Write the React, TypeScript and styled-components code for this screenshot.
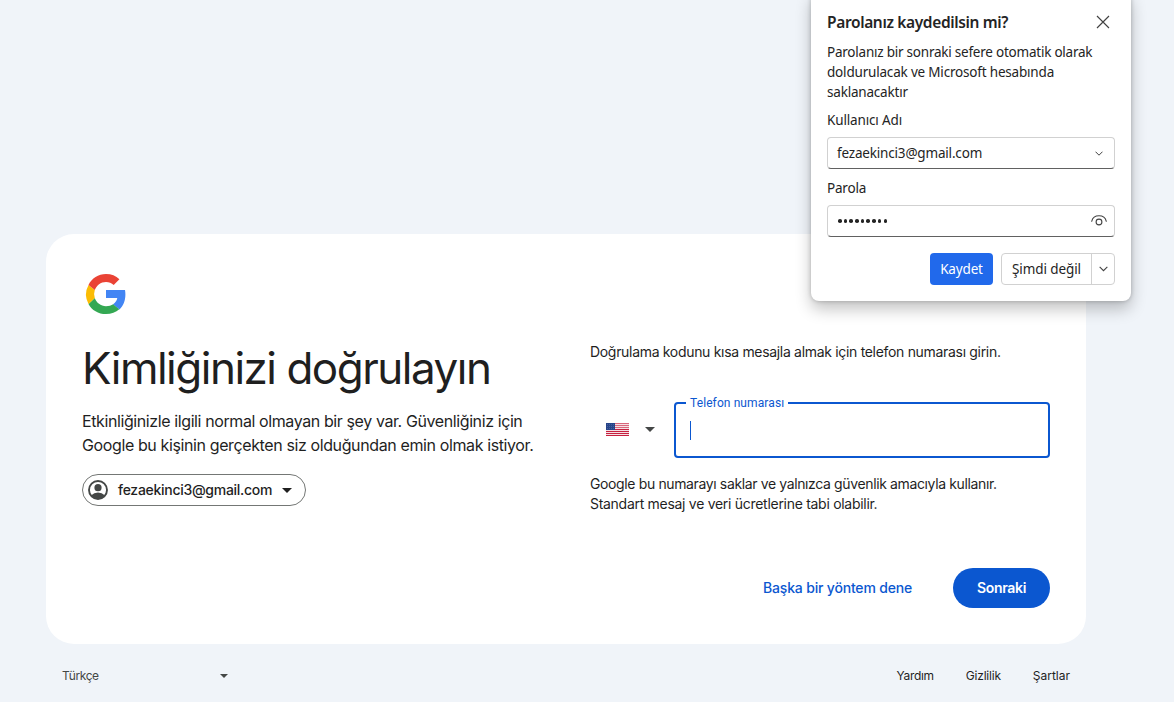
import React from "react";
import styled, { createGlobalStyle } from "styled-components";

const GlobalStyle = createGlobalStyle`
  * { box-sizing: border-box; }
  html, body { margin: 0; padding: 0; background: #f0f4f9; overflow: hidden; }
  button, input { font: inherit; letter-spacing: inherit; }
  svg { display: block; flex: none; }
`;

const sans = `Inter, Roboto, "Liberation Sans", sans-serif`;
const segoe = `"Noto Sans", "Open Sans", sans-serif`;

const Page = styled.div`
  position: relative;
  width: 1174px;
  height: 702px;
  padding: 234px 88px 0 46px;
  background: #f0f4f9;
  font-family: ${sans};
  color: #1f1f1f;
  overflow: hidden;
`;

const Card = styled.main`
  display: grid;
  grid-template-columns: 508px 1fr;
  grid-template-rows: 72px 1fr 40px;
  height: 410px;
  padding: 36px;
  border-radius: 28px;
  background: #fff;
`;

const LogoRow = styled.div`
  grid-column: 1 / -1;
`;

const Intro = styled.section`
  display: flex;
  flex-direction: column;
  align-items: flex-start;
`;

const Line = styled.span<{ $ls?: number }>`
  display: block;
  white-space: nowrap;
  letter-spacing: ${(p) => p.$ls ?? 0}px;
`;

const Heading = styled.h1`
  margin: 0;
  font: 400 44px/52px ${sans};
`;

const Lead = styled.p`
  margin: 15px 0 17px;
  font-size: 16px;
  line-height: 24px;
`;

const AccountChip = styled.button`
  display: flex;
  align-items: center;
  width: 224px;
  height: 32px;
  padding: 0 13px 0 5px;
  border: 1px solid #747775;
  border-radius: 16px;
  background: #fff;
  color: #1f1f1f;
  font-size: 14px;
  font-weight: 500;
`;

const ChipText = styled.span`
  flex: 1;
  padding: 0 0 2px 10px;
  text-align: left;
`;

const FormColumn = styled.section`
  display: flex;
  flex-direction: column;
  font-size: 14px;
  line-height: 20px;
`;

const PhoneRow = styled.div`
  display: flex;
  height: 56px;
  margin: 40px 0 16px;
`;

const Country = styled.div`
  display: flex;
  align-items: center;
  justify-content: space-between;
  width: 84px;
  padding: 0 19px 1px 16px;
`;

const PhoneField = styled.fieldset`
  flex: 1;
  min-width: 0;
  height: 63px;
  margin: -7px 0 0;
  padding: 10px 14px 0;
  border: 2px solid #0b57d0;
  border-radius: 4px;
`;

const FieldLabel = styled.legend`
  margin-left: -4px;
  padding: 0 4px;
  font: 400 12px/16px Roboto, sans-serif;
  color: #0b57d0;
`;

const Caret = styled.div`
  width: 1px;
  height: 19px;
  background: #0b57d0;
`;

const Actions = styled.div`
  grid-column: 2;
  display: flex;
  justify-content: flex-end;
  align-items: center;
  gap: 41px;
  font-size: 14px;
  font-weight: 500;
`;

const TextButton = styled.button`
  padding: 0 0 2px;
  border: 0;
  background: none;
  color: #0b57d0;
`;

const PrimaryButton = styled.button`
  display: flex;
  align-items: center;
  justify-content: center;
  width: 97px;
  height: 40px;
  padding: 0 0 2px;
  border: 0;
  border-radius: 20px;
  background: #0b57d0;
  color: #fff;
  font-weight: 600;
`;

const Footer = styled.footer`
  display: flex;
  align-items: center;
  justify-content: space-between;
  height: 63px;
  padding: 0 16px;
  font-size: 12px;
`;

const Language = styled.div`
  display: flex;
  align-items: center;
  justify-content: space-between;
  width: 166px;
  color: #444746;
`;

const FooterLinks = styled.nav`
  display: flex;
  gap: 32px;
`;

const Popup = styled.aside`
  position: absolute;
  top: -9px;
  left: 811px;
  width: 320px;
  height: 310px;
  padding: 19px 16px 16px;
  border-radius: 8px;
  background: #fff;
  box-shadow: 0 8px 16px rgba(0, 0, 0, 0.24), 0 0 4px rgba(0, 0, 0, 0.22);
  font: 400 13.5px/20px ${segoe};
  color: #242424;
`;

const PopupHeader = styled.header`
  display: flex;
  justify-content: space-between;
  align-items: center;
  height: 24px;
  margin-bottom: 8px;
  padding-right: 5px;
  font-size: 15.5px;
  font-weight: 600;
`;

const PopupLabel = styled.div`
  margin: 8px 0 7px;
`;

const PopupInput = styled.div<{ $end: number }>`
  display: flex;
  align-items: center;
  justify-content: space-between;
  height: 32px;
  margin-bottom: 9px;
  padding: 0 ${(p) => p.$end}px 0 9px;
  border: 1px solid #d1d1d1;
  border-bottom-color: #616161;
  border-radius: 4px;
`;

const Dots = styled.div`
  display: flex;
  gap: 2.1px;
  padding-left: 1px;
`;

const Dot = styled.i`
  width: 3.6px;
  height: 3.6px;
  border-radius: 50%;
  background: #242424;
`;

const PopupActions = styled.div`
  display: flex;
  justify-content: flex-end;
  gap: 8px;
  margin-top: 16px;
`;

const SaveButton = styled.button`
  display: flex;
  align-items: center;
  justify-content: center;
  width: 63px;
  height: 32px;
  padding: 0;
  border: 0;
  border-radius: 4px;
  background: #2169eb;
  color: #fff;
`;

const SplitButton = styled.div`
  display: flex;
  width: 114px;
  height: 32px;
  border: 1px solid #d1d1d1;
  border-radius: 4px;
`;

const SplitPart = styled.button<{ $width: number; $divided?: boolean }>`
  display: flex;
  align-items: center;
  justify-content: center;
  width: ${(p) => p.$width}px;
  padding: 0;
  border: 0;
  border-left: ${(p) => (p.$divided ? "1px solid #d1d1d1" : "0")};
  background: none;
  color: #242424;
`;

const GoogleLogo = () => (
  <svg width="48" height="48" viewBox="0 0 48 48">
    <path fill="#4285F4" d="M24 20v8h11.300c-.5 2.600-2 4.900-4.200 6.300v.1l6.400 5C41.300 35.900 43.400 30.800 43.400 24.500c0-1.600-.1-3.100-.4-4.500z" />
    <path fill="#34A853" d="M6.500 33.900C9.700 40 16.300 44 24 44c5.400 0 9.900-1.800 13.300-4.800l-6.200-4.900c-1.800 1.200-4.200 1.900-7.100 1.900-5.200 0-9.600-3.500-11.200-8.200z" />
    <path fill="#FBBC04" d="M12.800 28a11.900 11.900 0 0 1 0-7.900l-6.300-5.200a20 20 0 0 0 0 19z" />
    <path fill="#EA4335" d="M24 11.900c3 0 5.600 1 7.700 3l5.700-5.700C33.900 5.900 29.400 4 24 4 16.300 4 9.700 8.400 6.500 14.900l6.300 5.200c1.600-4.700 6-8.200 11.200-8.200z" />
  </svg>
);

const AvatarIcon = () => (
  <svg width="20" height="20" viewBox="0 0 20 20" fill="none">
    <circle cx="10" cy="10" r="9" stroke="#444746" strokeWidth="1.9" />
    <circle cx="10" cy="7.700" r="3.600" fill="#444746" />
    <path d="M3.300 15.300a9.300 9.300 0 0 1 13.400 0A9 9 0 0 1 10 19a9 9 0 0 1-6.700-3.700z" fill="#444746" />
  </svg>
);

const Triangle = ({ size, color }: { size: number; color: string }) => (
  <svg width={size} height={size / 2} viewBox="0 0 10 5">
    <path d="M0 0h10L5 5z" fill={color} />
  </svg>
);

const Flag = () => (
  <svg width="23" height="13" viewBox="0 0 23 13">
    <rect width="23" height="13" fill="#f5dfe3" />
    {[0, 2, 4, 6, 8, 10, 12].map((y) => (
      <rect key={y} y={y} width="23" height="1" fill={y < 6 ? "#d9667b" : "#c6203f"} />
    ))}
    <rect width="9" height="7" fill="#27458a" />
    {[1, 3, 5].map((y) => (
      <path key={y} d={`M1 ${y + 0.5}h7.500`} stroke="#6078ad" strokeWidth=".7" strokeDasharray=".8 1.200" />
    ))}
  </svg>
);

const CloseIcon = () => (
  <svg width="14" height="15" viewBox="0 0 14 15">
    <path d="M1 1l12 12M13 1L1 13" stroke="#424242" strokeWidth="1.150" />
  </svg>
);

const Chevron = ({ width }: { width: number }) => (
  <svg width={width} height={width / 2 + 1} viewBox="0 0 8 5" fill="none">
    <path d="M.5.7L4 4.200 7.500.7" stroke="#424242" strokeWidth="1" />
  </svg>
);

const EyeIcon = () => (
  <svg width="16" height="12" viewBox="0 0 16 12" fill="none" stroke="#424242" strokeWidth="1.100" strokeLinecap="round">
    <path d="M.7 6.300C1.500 3 4.400.8 8 .8s6.500 2.200 7.300 5.500" />
    <circle cx="8" cy="7" r="2.900" />
  </svg>
);

export default function App() {
  return (
    <>
      <GlobalStyle />
      <Page>
        <Card>
          <LogoRow><GoogleLogo /></LogoRow>
          <Intro>
            <Heading><Line $ls={-1.5}>Kimliğinizi doğrulayın</Line></Heading>
            <Lead>
              <Line $ls={-0.4}>Etkinliğinizle ilgili normal olmayan bir şey var. Güvenliğiniz için</Line>
              <Line $ls={-0.385}>Google bu kişinin gerçekten siz olduğundan emin olmak istiyor.</Line>
            </Lead>
            <AccountChip>
              <AvatarIcon />
              <ChipText><Line $ls={-0.29}>fezaekinci3@gmail.com</Line></ChipText>
              <Triangle size={10} color="#1f1f1f" />
            </AccountChip>
          </Intro>
          <FormColumn>
            <Line $ls={-0.315}>Doğrulama kodunu kısa mesajla almak için telefon numarası girin.</Line>
            <PhoneRow>
              <Country>
                <Flag />
                <Triangle size={10} color="#444746" />
              </Country>
              <PhoneField>
                <FieldLabel><Line $ls={0.1}>Telefon numarası</Line></FieldLabel>
                <Caret />
              </PhoneField>
            </PhoneRow>
            <Line $ls={-0.37}>Google bu numarayı saklar ve yalnızca güvenlik amacıyla kullanır.</Line>
            <Line $ls={-0.29}>Standart mesaj ve veri ücretlerine tabi olabilir.</Line>
          </FormColumn>
          <Actions>
            <TextButton><Line $ls={-0.18}>Başka bir yöntem dene</Line></TextButton>
            <PrimaryButton><Line $ls={-0.3}>Sonraki</Line></PrimaryButton>
          </Actions>
        </Card>
        <Footer>
          <Language>
            <Line $ls={-0.4}>Türkçe</Line>
            <Triangle size={8} color="#444746" />
          </Language>
          <FooterLinks>
            <Line $ls={-0.3}>Yardım</Line>
            <Line $ls={-0.22}>Gizlilik</Line>
            <Line>Şartlar</Line>
          </FooterLinks>
        </Footer>
        <Popup>
          <PopupHeader>
            <Line $ls={-0.36}>Parolanız kaydedilsin mi?</Line>
            <CloseIcon />
          </PopupHeader>
          <Line $ls={-0.23}>Parolanız bir sonraki sefere otomatik olarak</Line>
          <Line $ls={-0.19}>doldurulacak ve Microsoft hesabında</Line>
          <Line $ls={-0.2}>saklanacaktır</Line>
          <PopupLabel><Line $ls={-0.15}>Kullanıcı Adı</Line></PopupLabel>
          <PopupInput $end={11}>
            <Line $ls={-0.18}>fezaekinci3@gmail.com</Line>
            <Chevron width={8} />
          </PopupInput>
          <PopupLabel><Line $ls={-0.2}>Parola</Line></PopupLabel>
          <PopupInput $end={7}>
            <Dots>{Array.from({ length: 9 }, (_, i) => <Dot key={i} />)}</Dots>
            <EyeIcon />
          </PopupInput>
          <PopupActions>
            <SaveButton><Line $ls={-0.15}>Kaydet</Line></SaveButton>
            <SplitButton>
              <SplitPart $width={89}><Line $ls={-0.1}>Şimdi değil</Line></SplitPart>
              <SplitPart $width={23} $divided><Chevron width={9} /></SplitPart>
            </SplitButton>
          </PopupActions>
        </Popup>
      </Page>
    </>
  );
}
